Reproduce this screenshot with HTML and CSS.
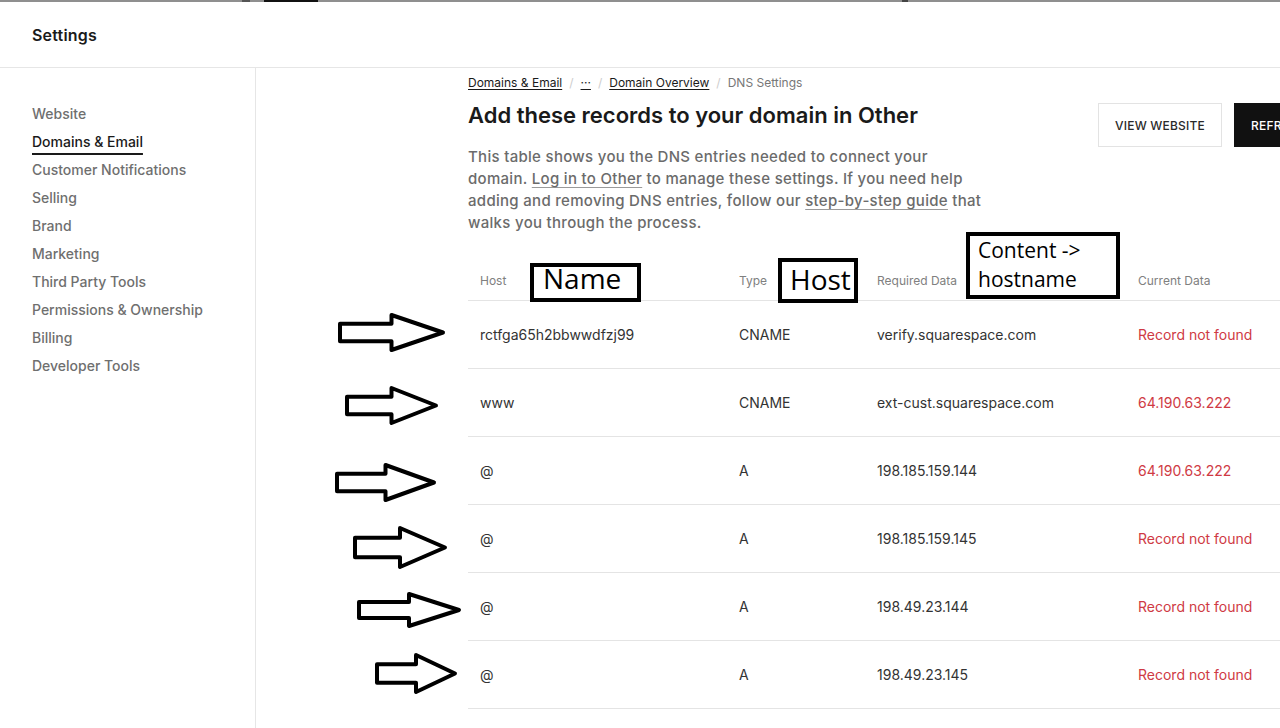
FILE: index.html
```html
<!DOCTYPE html>
<html lang="en">
<head>
    <meta charset="UTF-8">
    <meta name="viewport" content="width=device-width, initial-scale=1.0">
    <title>DNS Settings</title>
    <link rel="stylesheet" href="styles.css">
</head>
<body>

    <div class="topbar">
        <span class="seg seg-a"></span>
        <span class="seg seg-b"></span>
        <span class="seg seg-c"></span>
    </div>

    <header class="header">
        <h1>Settings</h1>
    </header>

    <div class="layout">
        <nav class="sidebar">
            <a class="nav-item" href="#">Website</a>
            <a class="nav-item active" href="#">Domains &amp; Email</a>
            <a class="nav-item" href="#">Customer Notifications</a>
            <a class="nav-item" href="#">Selling</a>
            <a class="nav-item" href="#">Brand</a>
            <a class="nav-item" href="#">Marketing</a>
            <a class="nav-item" href="#">Third Party Tools</a>
            <a class="nav-item" href="#">Permissions &amp; Ownership</a>
            <a class="nav-item" href="#">Billing</a>
            <a class="nav-item" href="#">Developer Tools</a>
        </nav>

        <main class="main">
            <div class="crumbs">
                <a href="#">Domains &amp; Email</a>
                <span class="sep">/</span>
                <a href="#">&middot;&middot;&middot;</a>
                <span class="sep">/</span>
                <a href="#">Domain Overview</a>
                <span class="sep">/</span>
                <span>DNS Settings</span>
            </div>

            <div class="intro">
                <div class="intro-text">
                    <h2>Add these records to your domain in Other</h2>
                    <p>
                        This table shows you the DNS entries needed to connect your<br>
                        domain. <a href="#">Log in to Other</a> to manage these settings. If you need help<br>
                        adding and removing DNS entries, follow our <a href="#">step-by-step guide</a> that<br>
                        walks you through the process.
                    </p>
                </div>
                <div class="actions">
                    <button class="btn">View Website</button>
                    <button class="btn btn-dark">Refresh</button>
                </div>
            </div>

            <div class="records">
                <div class="row head">
                    <span>Host</span><span>Type</span><span>Required Data</span><span>Current Data</span>
                </div>
                <div class="row">
                    <span>rctfga65h2bbwwdfzj99</span><span>CNAME</span><span>verify.squarespace.com</span><span class="bad">Record not found</span>
                </div>
                <div class="row">
                    <span>www</span><span>CNAME</span><span>ext-cust.squarespace.com</span><span class="bad">64.190.63.222</span>
                </div>
                <div class="row">
                    <span>@</span><span>A</span><span>198.185.159.144</span><span class="bad">64.190.63.222</span>
                </div>
                <div class="row">
                    <span>@</span><span>A</span><span>198.185.159.145</span><span class="bad">Record not found</span>
                </div>
                <div class="row">
                    <span>@</span><span>A</span><span>198.49.23.144</span><span class="bad">Record not found</span>
                </div>
                <div class="row">
                    <span>@</span><span>A</span><span>198.49.23.145</span><span class="bad">Record not found</span>
                </div>
            </div>
        </main>
    </div>

    <!-- hand drawn notes on top of the screenshot -->
    <div class="note note-name">Name</div>
    <div class="note note-host">Host</div>
    <div class="note note-content">Content -&gt;<br>hostname</div>

    <svg class="arrow arrow-1" viewBox="0 0 100 40" preserveAspectRatio="none"><path d="M0 10H50V0L100 20L50 40V30H0Z"/></svg>
    <svg class="arrow arrow-2" viewBox="0 0 100 40" preserveAspectRatio="none"><path d="M0 10H50V0L100 20L50 40V30H0Z"/></svg>
    <svg class="arrow arrow-3" viewBox="0 0 100 40" preserveAspectRatio="none"><path d="M0 10H50V0L100 20L50 40V30H0Z"/></svg>
    <svg class="arrow arrow-4" viewBox="0 0 100 40" preserveAspectRatio="none"><path d="M0 10H50V0L100 20L50 40V30H0Z"/></svg>
    <svg class="arrow arrow-5" viewBox="0 0 100 40" preserveAspectRatio="none"><path d="M0 10H50V0L100 20L50 40V30H0Z"/></svg>
    <svg class="arrow arrow-6" viewBox="0 0 100 40" preserveAspectRatio="none"><path d="M0 10H50V0L100 20L50 40V30H0Z"/></svg>

</body>
</html>
```

FILE: styles.css
```css
body {
    margin: 0;
    height: 728px;
    overflow: hidden;
    position: relative;
    background: #fff;
    color: #1a1a1a;
    font-family: Inter, "Liberation Sans", sans-serif;
}

/* thin strip at the very top */
.topbar {
    height: 2px;
    background: #8f8f8f;
    display: flex;
}
.seg {
    height: 2px;
}
.seg-a {
    margin-left: 242px;
    width: 8px;
    background: #555;
}
.seg-b {
    margin-left: 14px;
    width: 54px;
    background: #111;
}
.seg-c {
    margin-left: 584px;
    width: 6px;
    background: #444;
}

.header {
    height: 65px;
    border-bottom: 1px solid #e6e6e6;
    display: flex;
    align-items: center;
    padding-left: 32px;
}
.header h1 {
    margin: 0;
    font-size: 16px;
    font-weight: 600;
    letter-spacing: 0.2px;
}

.layout {
    display: flex;
    height: 660px;
}

/* Sidebar */
.sidebar {
    width: 256px;
    box-sizing: border-box;
    border-right: 1px solid #e6e6e6;
    padding: 32px 0 0 32px;
    flex-shrink: 0;
}
.nav-item {
    display: block;
    font-size: 14px;
    font-weight: 500;
    line-height: 28px;
    color: #6f6f6f;
    text-decoration: none;
}
.nav-item.active {
    color: #1a1a1a;
    text-decoration: underline;
    text-decoration-thickness: 2px;
    text-underline-offset: 6px;
}

/* Main content */
.main {
    flex: 1;
    min-width: 0;
    padding: 7px 0 0 212px;
}

.crumbs {
    display: flex;
    font-size: 12px;
    line-height: 16px;
    color: #777;
}
.crumbs a {
    color: #1a1a1a;
    text-decoration: underline;
    text-underline-offset: 2px;
}
.sep {
    color: #cdcdcd;
    margin: 0 7px;
}

.intro {
    display: flex;
    justify-content: space-between;
    width: 876px;
    margin-top: 10px;
}
.intro h2 {
    margin: 0;
    font-size: 22px;
    line-height: 28px;
    font-weight: 600;
}
.intro p {
    margin: 17px 0 0;
    font-size: 15px;
    font-weight: 500;
    letter-spacing: 0.3px;
    line-height: 22px;
    color: #6b6b6b;
    white-space: nowrap;
}
.intro p a {
    color: inherit;
    text-decoration: underline;
    text-decoration-color: #9a9a9a;
    text-underline-offset: 3px;
}

.actions {
    display: flex;
    gap: 12px;
    margin-top: 2px;
}
.btn {
    height: 44px;
    padding: 0 16px;
    border: 1px solid #e3e3e3;
    background: #fff;
    color: #2a2a2a;
    font-family: Inter, "Liberation Sans", sans-serif;
    font-size: 12px;
    font-weight: 500;
    letter-spacing: 0.2px;
    text-transform: uppercase;
}
.btn-dark {
    width: 110px;
    background: #111;
    border-color: #111;
    color: #fff;
    text-align: left;
}

/* DNS table */
.records {
    margin-top: 26px;
    width: 876px;
}
.row {
    display: grid;
    grid-template-columns: 259px 138px 261px 1fr;
    align-items: center;
    height: 67px;
    border-bottom: 1px solid #e4e4e4;
    font-size: 14px;
    color: #333;
}
.row span {
    padding-left: 12px;
}
.row.head {
    height: 40px;
    font-size: 12px;
    color: #808080;
}
.bad {
    color: #cf3a44;
}

/* annotations */
.note {
    position: absolute;
    box-sizing: border-box;
    border: 4px solid #000;
    background: #fff;
    color: #000;
    font-family: "Open Sans", sans-serif;
}
.note-name {
    left: 530px;
    top: 263px;
    width: 111px;
    height: 39px;
    padding-left: 9px;
    font-size: 28px;
    line-height: 22px;
}
.note-host {
    left: 778px;
    top: 258px;
    width: 80px;
    height: 45px;
    padding: 6px 0 0 8px;
    font-size: 28px;
    line-height: 22px;
}
.note-content {
    left: 966px;
    top: 232px;
    width: 154px;
    height: 67px;
    padding-left: 8px;
    font-size: 21px;
    line-height: 29px;
}

.arrow {
    position: absolute;
    overflow: visible;
}
.arrow path {
    fill: #fff;
    stroke: #000;
    stroke-width: 4px;
    stroke-linejoin: round;
    vector-effect: non-scaling-stroke;
}
.arrow-1 { left: 340px; top: 315px; width: 103px; height: 35px; }
.arrow-2 { left: 347px; top: 388px; width: 89px;  height: 35px; }
.arrow-3 { left: 337px; top: 465px; width: 97px;  height: 35px; }
.arrow-4 { left: 355px; top: 528px; width: 90px;  height: 39px; }
.arrow-5 { left: 359px; top: 594px; width: 100px; height: 32px; }
.arrow-6 { left: 377px; top: 655px; width: 78px;  height: 37px; }
```
